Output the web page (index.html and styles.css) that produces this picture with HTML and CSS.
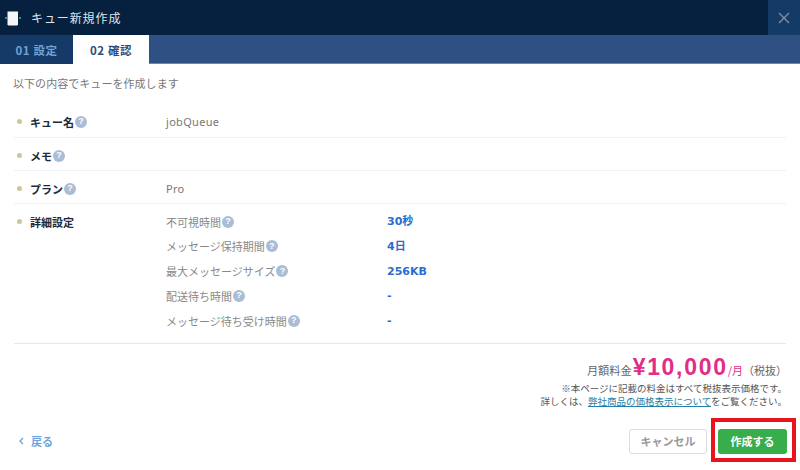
FILE: index.html
```html
<!DOCTYPE html>
<html lang="ja">
<head>
<meta charset="utf-8">
<title>キュー新規作成</title>
<link rel="stylesheet" href="styles.css">
</head>
<body>
<div class="modal">
  <header class="head">
    <svg class="logo" width="16" height="18" viewBox="0 0 16 18"><rect x="0" y="8" width="2" height="2" fill="#2f8f8a"/><rect x="14" y="8" width="2" height="2" fill="#2f8f8a"/><path d="M2.5 2.5h10.5v13l-1 1H3.5l-1-1z" fill="#f4f5f7"/></svg>
    <h1 class="title">キュー新規作成</h1>
    <button class="close"><svg width="12" height="12" viewBox="0 0 12 12"><path d="M1 1l10 10M11 1L1 11" stroke="#7f8ea3" stroke-width="1.4" fill="none"/></svg></button>
  </header>
  <nav class="tabs">
    <div class="tab done">01 設定</div>
    <div class="tab active">02 確認</div>
  </nav>
  <main class="body">
    <p class="lead">以下の内容でキューを作成します</p>
    <div class="row r1">
      <div class="label"><i class="dot"></i>キュー名<span class="q">?</span></div>
      <div class="val">jobQueue</div>
    </div>
    <div class="row r2">
      <div class="label"><i class="dot"></i>メモ<span class="q">?</span></div>
    </div>
    <div class="row r3">
      <div class="label"><i class="dot"></i>プラン<span class="q">?</span></div>
      <div class="val">Pro</div>
    </div>
    <div class="row r4">
      <div class="label"><i class="dot"></i>詳細設定</div>
      <div class="detail">
        <div class="dk">不可視時間<span class="q">?</span></div><div class="dv">30秒</div>
        <div class="dk">メッセージ保持期間<span class="q">?</span></div><div class="dv">4日</div>
        <div class="dk">最大メッセージサイズ<span class="q">?</span></div><div class="dv">256KB</div>
        <div class="dk">配送待ち時間<span class="q">?</span></div><div class="dv">-</div>
        <div class="dk">メッセージ待ち受け時間<span class="q">?</span></div><div class="dv">-</div>
      </div>
    </div>
    <div class="price">
      <div class="amount"><span class="pl">月額料金</span><span class="pn">¥10,000</span><span class="pu">/月</span><span class="pt">（税抜）</span></div>
      <p class="note">※本ページに記載の料金はすべて税抜表示価格です。<br>詳しくは、<a href="#">弊社商品の価格表示について</a>をご覧ください。</p>
    </div>
    <footer class="foot">
      <a class="back" href="#"><svg width="6" height="8" viewBox="0 0 6 8"><path d="M5 1L2 4l3 3" stroke="#6ea5dc" stroke-width="1.4" fill="none"/></svg>戻る</a>
      <div class="actions">
        <button class="btn cancel">キャンセル</button>
        <button class="btn create">作成する</button>
      </div>
    </footer>
  </main>
  <div class="highlight"></div>
</div>
</body>
</html>
```
FILE: styles.css
```css
* { box-sizing: border-box; }
html, body { margin: 0; padding: 0; }
body {
  width: 800px; height: 470px; overflow: hidden; background: #fff;
  font-family: "Noto Sans CJK JP", "Noto Sans", sans-serif;
  color: #777;
  font-size: 11px;
}
.modal { position: relative; width: 800px; height: 470px; }
.head { height: 35px; background: #06203f; display: flex; align-items: center; padding-left: 5px; }
.logo { flex: none; }
.title { margin: 0 0 0 10px; flex: 1; font-size: 12px; font-weight: 400; color: #dfe5ec; letter-spacing: 0.9px; }
.close { width: 32px; height: 35px; border: 0; padding: 0; background: #143a66; display: flex; align-items: center; justify-content: center; }
.tabs { height: 29px; background: #2f5082; display: flex; border-bottom: 1px solid #6c86ad; }
.tab { height: 29px; display: flex; align-items: center; justify-content: center; font-size: 11.5px; font-weight: 700; letter-spacing: 0.6px; }
.done { width: 73px; background: #163a68; color: #6fa3d4; }
.active { width: 76px; background: #fff; color: #2a4d80; }
.body { padding: 0 14px; }
.lead { margin: 0 0 0 -1px; padding-top: 11px; height: 41px; font-size: 11px; line-height: 17px; color: #777; letter-spacing: 0.05px; }
.row { display: flex; border-bottom: 1px solid #eef1f7; }
.r1 { height: 33px; padding-top: 8px; }
.r2 { height: 33px; padding-top: 9px; }
.r3 { height: 33px; padding-top: 9px; }
.r4 { height: 140px; padding-top: 9px; border-bottom-color: #e8e8e8; }
.label { width: 152px; flex: none; display: flex; align-items: center; height: 17px; font-size: 11px; font-weight: 700; color: #1d2b3c; }
.dot { width: 5px; height: 5px; border-radius: 50%; background: #cfc696; margin: 0 8px 0 3px; flex: none; }
.q {
  display: inline-flex; align-items: center; justify-content: center;
  width: 12px; height: 12px; border-radius: 50%; background: #a9bdd6; color: #fff;
  font-size: 9px; font-weight: 700; line-height: 1; margin-left: 1px; flex: none;
  font-family: "Liberation Sans", sans-serif;
}
.val { height: 17px; line-height: 17px; font-size: 11px; color: #777; letter-spacing: 0.3px; font-family: "Noto Sans", sans-serif; }
.detail { display: grid; grid-template-columns: 221px 1fr; grid-auto-rows: 24.75px; }
.dk { display: flex; align-items: center; height: 17px; font-size: 11px; color: #888; }
.dk .q { margin-left: 1px; }
.dv { height: 17px; line-height: 17px; font-size: 11px; font-weight: 700; color: #2a6ccf; font-family: "DejaVu Sans", "Noto Sans CJK JP", sans-serif; }
.price { text-align: right; }
.amount { display: flex; justify-content: flex-end; align-items: baseline; height: 24px; margin-top: 10px; margin-right: -1px; }
.pl { font-size: 11.2px; color: #666; }
.pn { font-size: 23px; font-weight: 700; color: #e22d87; letter-spacing: 1.7px; font-family: "Liberation Sans", sans-serif; margin-left: 1px; }
.pu { font-size: 11px; color: #e22d87; }
.pt { font-size: 11px; color: #666; }
.note { margin: 4px 0 0; font-size: 9.5px; line-height: 13px; color: #555; margin-right: -1px; }
.note a { color: #1f7fa8; }
.foot { display: flex; justify-content: space-between; align-items: center; margin-top: 20px; height: 26px; }
.back { display: flex; align-items: center; gap: 7px; padding-left: 4px; font-size: 11px; font-weight: 700; color: #6aa5df; text-decoration: none; }
.actions { display: flex; gap: 11px; margin-right: -1px; }
.btn { height: 25px; border-radius: 3px; font-family: inherit; font-size: 11px; font-weight: 700; padding: 0; }
.cancel { width: 78px; border: 1px solid #ddd; background: #fff; color: #999; }
.create { width: 69px; border: 0; background: #37ad4b; color: #fff; }
.highlight { position: absolute; left: 711px; top: 418px; width: 85px; height: 44px; border: 4px solid #e8141e; }
```
